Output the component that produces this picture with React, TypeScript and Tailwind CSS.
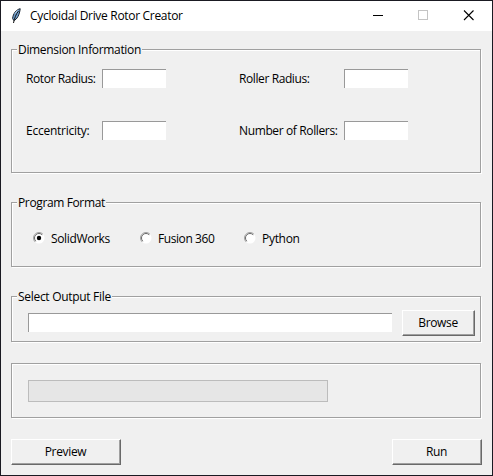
import type { ReactNode } from 'react';

function Group({ title, className, children }: { title?: ReactNode; className: string; children: ReactNode }) {
  return (
    <section
      className={`flex w-[470px] flex-col border border-[#a0a0a0] shadow-[1px_1px_0_#fff,inset_1px_1px_0_#fff] ${className}`}
    >
      {title && <h2 className="-mt-2 ml-[5px] h-4 self-start bg-[#f0f0f0] px-px leading-4">{title}</h2>}
      {children}
    </section>
  );
}

function Entry({ className }: { className: string }) {
  return (
    <input
      className={`block h-[19px] rounded-none border-t border-l border-[#999] bg-white outline-none ${className}`}
    />
  );
}

function Button({ className, children }: { className: string; children: ReactNode }) {
  return (
    <button
      className={`flex h-[26px] items-center justify-center border border-t-white border-r-[#696969] border-b-[#696969] border-l-white bg-[#f0f0f0] pr-px shadow-[inset_-1px_-1px_0_#a0a0a0] ${className}`}
    >
      {children}
    </button>
  );
}

function Radio({ checked, className, children }: { checked?: boolean; className: string; children: ReactNode }) {
  return (
    <label className={`flex h-4 items-center ${className}`}>
      <svg width="12" height="12" viewBox="0 0 12 12" className="-mt-[2px] mr-[6px] shrink-0">
        <circle cx="6" cy="6" r="5.5" fill="#fff" />
        <path d="M2.1 9.9A5.5 5.5 0 0 1 9.9 2.1" fill="none" stroke="#a0a0a0" />
        <path d="M2.8 9.2A4.5 4.5 0 0 1 9.2 2.8" fill="none" stroke="#696969" />
        {checked && <circle cx="6" cy="6" r="2.2" fill="#000" />}
      </svg>
      {children}
    </label>
  );
}

function Feather() {
  return (
    <svg width="16" height="16" viewBox="0 0 16 16">
      <path d="M12.2.7C8.500 1.500 5 5.500 4.600 10.500L5.800 12.500C9 11.500 11.500 7 12.200.7Z" fill="#6f9fd0" stroke="#17222f" strokeWidth="1" />
      <path d="M10.500 3C8 6 6.500 10 5.500 15" fill="none" stroke="#111" strokeWidth="1" />
      <path d="M7 5.500L9.500 2.500" stroke="#b9d5ee" strokeWidth="1" />
    </svg>
  );
}

export default function App() {
  return (
    <div className="flex h-[476px] w-[493px] flex-col overflow-hidden border border-[#1a1a22] bg-[#f0f0f0] font-['Open_Sans','Noto_Sans',sans-serif] text-[12px] leading-4 whitespace-nowrap text-black">
      <header className="flex h-[30px] shrink-0 items-center bg-white">
        <div className="ml-[7px] h-4 w-4">
          <Feather />
        </div>
        <h1 className="ml-[6px] tracking-[-0.31px]">Cycloidal Drive Rotor Creator</h1>
        <svg width="102" height="12" viewBox="0 0 102 12" className="mr-[17px] ml-auto" fill="none">
          <path d="M0 5.500H10" stroke="#000" />
          <rect x="45.500" y=".5" width="9" height="9" stroke="#c4c4c4" />
          <path d="M91 .5L100.500 10M100.500 .5L91 10" stroke="#000" strokeWidth="1.1" />
        </svg>
      </header>

      <main className="flex flex-1 flex-col pt-[18px] pl-[10px]">
        <Group title={<span className="tracking-[-0.33px]">Dimension Information</span>} className="h-[124px]">
          <div className="mt-[11px] ml-[14px] grid grid-cols-[76px_137px_105px_64px] gap-y-[33px]">
            <span className="pt-[2px] tracking-[-0.4px]">Rotor Radius:</span>
            <Entry className="w-[64px]" />
            <span className="pt-[2px] tracking-[-0.4px]">Roller Radius:</span>
            <Entry className="w-[64px]" />
            <span className="pt-[2px] tracking-[-0.25px]">Eccentricity:</span>
            <Entry className="w-[64px]" />
            <span className="pt-[2px] tracking-[-0.37px]">Number of Rollers:</span>
            <Entry className="w-[64px]" />
          </div>
        </Group>

        <Group title={<span className="tracking-[-0.37px]">Program Format</span>} className="mt-[29px] h-[65px]">
          <div className="mt-[20px] ml-[21px] flex">
            <Radio checked className="w-[107px] tracking-[-0.35px]">SolidWorks</Radio>
            <Radio className="w-[104px] tracking-[-0.42px]">Fusion 360</Radio>
            <Radio className="tracking-[-0.3px]">Python</Radio>
          </div>
        </Group>

        <Group title={<span className="tracking-[-0.3px]">Select Output File</span>} className="mt-[29px] h-[46px]">
          <div className="mt-[5px] ml-4 flex items-start">
            <Entry className="mt-[3px] w-[364px]" />
            <Button className="ml-[10px] w-[73px] tracking-[-0.35px]">Browse</Button>
          </div>
        </Group>

        <Group className="mt-[21px] h-[55px]">
          <div className="mt-4 ml-4 h-[22px] w-[300px] border border-[#bcbcbc] bg-[#e6e6e6]" />
        </Group>

        <div className="mt-[21px] flex w-[471px] justify-between">
          <Button className="w-[110px] tracking-[-0.35px]">Preview</Button>
          <Button className="w-[90px] tracking-[-0.3px]">Run</Button>
        </div>
      </main>
    </div>
  );
}
